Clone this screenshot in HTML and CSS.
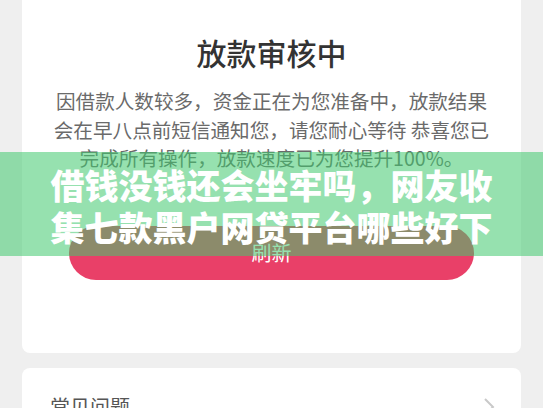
FILE: index.html
```html
<!DOCTYPE html>
<html lang="zh-Hans">
<head>
	<meta charset="UTF-8">
	<meta name="viewport" content="width=device-width, initial-scale=1.0">
	<title>放款审核中</title>
	<link rel="stylesheet" href="styles.css">
</head>
<body>
	<div class="page">
		<div class="card status-card">
			<div class="status-icon">
				<svg width="40" height="40" viewBox="0 0 40 40"><circle cx="20" cy="20" r="19" fill="#fbf3d6"/></svg>
			</div>
			<h1 class="status-title">放款审核中</h1>
			<p class="status-text">因借款人数较多，资金正在为您准备中，放款结果<br>会在早八点前短信通知您，请您耐心等待 恭喜您已<br>完成所有操作，放款速度已为您提升100%。</p>
			<button class="refresh-btn">刷新</button>
		</div>

		<div class="card faq-card">
			<div class="faq-row">
				<span class="faq-title">常见问题</span>
				<svg class="chevron" width="12" height="20" viewBox="0 0 12 20"><path d="M2 2 L10 10 L2 18" fill="none" stroke="#c9c9c9" stroke-width="2"/></svg>
			</div>
		</div>
	</div>

	<div class="banner">
		<p class="banner-text">借钱没钱还会坐牢吗，网友收<br>集七款黑户网贷平台哪些好下</p>
	</div>
</body>
</html>
```

FILE: styles.css
```css
body {
	margin: 0;
	padding: 0;
	background: #efefef;
	font-family: "Noto Sans CJK SC", "Noto Sans", sans-serif;
	overflow: hidden;
}

.page {
	padding: 0 22px;
}

.card {
	background: #fff;
	border-radius: 8px;
}

.status-card {
	margin-top: -40px;
	padding: 0 20px 73px;
	text-align: center;
}

.status-icon {
	height: 42px;
	display: flex;
	justify-content: center;
	padding-left: 55px;
}

.status-title {
	margin: 30px 0 0;
	font-size: 30px;
	line-height: 40px;
	font-weight: 500;
	color: #333;
}

.status-text {
	margin: 15px 0 0;
	font-size: 19.6px;
	line-height: 28.5px;
	color: #6a6a6a;
}

.refresh-btn {
	display: block;
	width: 405px;
	height: 54px;
	margin: 53px auto 0;
	border: none;
	border-radius: 27px;
	background: #e94068;
	color: #fff;
	font-family: inherit;
	font-size: 20px;
}

.faq-card {
	margin-top: 15px;
	padding: 24px 26px 24px 28px;
}

.faq-row {
	display: flex;
	align-items: center;
	justify-content: space-between;
}

.faq-title {
	font-size: 20px;
	line-height: 30px;
	color: #555;
}

.banner {
	position: absolute;
	top: 152px;
	left: 0;
	right: 0;
	height: 104px;
	background: rgba(64, 200, 110, 0.55);
}

.banner-text {
	margin: 0;
	padding-top: 12px;
	text-align: center;
	font-size: 34px;
	line-height: 42px;
	font-weight: 900;
	color: #fff;
}
```
